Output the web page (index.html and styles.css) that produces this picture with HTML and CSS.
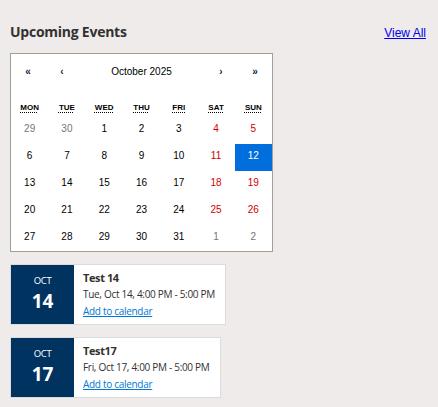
FILE: index.html
```html
<!DOCTYPE html>
<html lang="en">
<head>
<meta charset="utf-8">
<title>Upcoming Events</title>
<link rel="stylesheet" href="styles.css">
</head>
<body>
<div class="widget">
  <div class="header">
    <h2 class="title">Upcoming Events</h2>
    <a class="view-all" href="#">View All</a>
  </div>

  <div class="calendar">
    <div class="nav">
      <button class="nav-btn">«</button>
      <button class="nav-btn">‹</button>
      <span class="nav-label">October 2025</span>
      <button class="nav-btn">›</button>
      <button class="nav-btn">»</button>
    </div>
    <div class="weekdays">
      <div class="wd"><abbr title="Monday">Mon</abbr></div>
      <div class="wd"><abbr title="Tuesday">Tue</abbr></div>
      <div class="wd"><abbr title="Wednesday">Wed</abbr></div>
      <div class="wd"><abbr title="Thursday">Thu</abbr></div>
      <div class="wd"><abbr title="Friday">Fri</abbr></div>
      <div class="wd"><abbr title="Saturday">Sat</abbr></div>
      <div class="wd"><abbr title="Sunday">Sun</abbr></div>
    </div>
    <div class="days">
      <div class="day other">29</div><div class="day other">30</div><div class="day">1</div><div class="day">2</div><div class="day">3</div><div class="day weekend">4</div><div class="day weekend">5</div>
      <div class="day">6</div><div class="day">7</div><div class="day">8</div><div class="day">9</div><div class="day">10</div><div class="day weekend">11</div><div class="day active">12</div>
      <div class="day">13</div><div class="day">14</div><div class="day">15</div><div class="day">16</div><div class="day">17</div><div class="day weekend">18</div><div class="day weekend">19</div>
      <div class="day">20</div><div class="day">21</div><div class="day">22</div><div class="day">23</div><div class="day">24</div><div class="day weekend">25</div><div class="day weekend">26</div>
      <div class="day">27</div><div class="day">28</div><div class="day">29</div><div class="day">30</div><div class="day">31</div><div class="day other">1</div><div class="day other">2</div>
    </div>
  </div>

  <div class="events">
    <div class="event">
      <div class="date-block">
        <span class="month">OCT</span>
        <span class="daynum">14</span>
      </div>
      <div class="event-body">
        <div class="event-title">Test 14</div>
        <div class="event-time">Tue, Oct 14, 4:00 PM - 5:00 PM</div>
        <a class="event-link" href="#">Add to calendar</a>
      </div>
    </div>
    <div class="event">
      <div class="date-block">
        <span class="month">OCT</span>
        <span class="daynum">17</span>
      </div>
      <div class="event-body">
        <div class="event-title">Test17</div>
        <div class="event-time">Fri, Oct 17, 4:00 PM - 5:00 PM</div>
        <a class="event-link" href="#">Add to calendar</a>
      </div>
    </div>
  </div>
</div>
</body>
</html>
```

FILE: styles.css
```css
html, body {
  margin: 0;
  padding: 0;
  background: #f0ebeb;
}

body {
  font-family: "Open Sans", "Noto Sans", sans-serif;
  color: #323130;
}

.widget {
  padding: 22px 12px 10px 10px;
}

.header {
  display: flex;
  justify-content: space-between;
  align-items: baseline;
  margin-bottom: 12px;
}

.title {
  margin: 0;
  font-size: 14px;
  font-weight: 700;
  line-height: 19px;
  letter-spacing: -0.25px;
  color: #323130;
}

.view-all {
  font-family: "Liberation Sans", Arial, sans-serif;
  font-size: 12px;
  color: #0000ee;
  text-decoration: underline;
}

/* Calendar */
.calendar {
  box-sizing: border-box;
  width: 263px;
  background: #fff;
  border: 1px solid #a0a096;
  font-family: "Liberation Sans", Arial, sans-serif;
  color: #000;
}

.nav {
  display: flex;
  align-items: center;
  height: 34px;
  margin-bottom: 10px;
}

.nav-btn {
  width: 34px;
  height: 34px;
  padding: 0;
  border: 0;
  background: none;
  font-family: inherit;
  font-size: 10px;
  font-weight: 700;
  color: #1b1b3a;
}

.nav-label {
  flex: 1;
  text-align: center;
  font-size: 10px;
}

.weekdays {
  display: grid;
  grid-template-columns: repeat(7, 1fr);
  height: 19px;
  align-items: center;
}

.wd {
  text-align: center;
  text-transform: uppercase;
  font-size: 8px;
  font-weight: 700;
  line-height: 10px;
}

.wd abbr {
  text-decoration: underline dotted;
  text-underline-offset: 2px;
}

.days {
  display: grid;
  grid-template-columns: repeat(7, 1fr);
  grid-template-rows: repeat(5, 1fr);
  height: 134px;
}

.day {
  display: flex;
  align-items: center;
  justify-content: center;
  font-size: 10px;
  color: #000;
  padding-bottom: 3px;
}

.day.weekend {
  color: #d10000;
}

.day.other {
  color: #757575;
}

.day.active {
  background: #006edc;
  color: #fff;
}

/* Events */
.events {
  display: flex;
  flex-direction: column;
  align-items: flex-start;
  gap: 12px;
  margin-top: 12px;
}

.event {
  display: flex;
  background: #fff;
  border: 1px solid #dcdcdc;
}

.date-block {
  width: 63px;
  background: #00335f;
  color: #fff;
  display: flex;
  flex-direction: column;
  align-items: center;
  justify-content: center;
}

.month {
  font-size: 9.5px;
  line-height: 14px;
  letter-spacing: -0.3px;
}

.daynum {
  font-size: 19px;
  font-weight: 700;
  line-height: 26px;
  margin-bottom: 2px;
}

.event-body {
  padding: 4px 10px 4px 9px;
}

.event-title {
  font-size: 11px;
  font-weight: 700;
  line-height: 17px;
  letter-spacing: -0.4px;
}

.event-time {
  font-size: 10px;
  line-height: 17px;
  letter-spacing: -0.3px;
}

.event-link {
  display: block;
  font-size: 10px;
  line-height: 17px;
  letter-spacing: -0.3px;
  color: #0078d4;
  text-decoration: underline;
}
```
